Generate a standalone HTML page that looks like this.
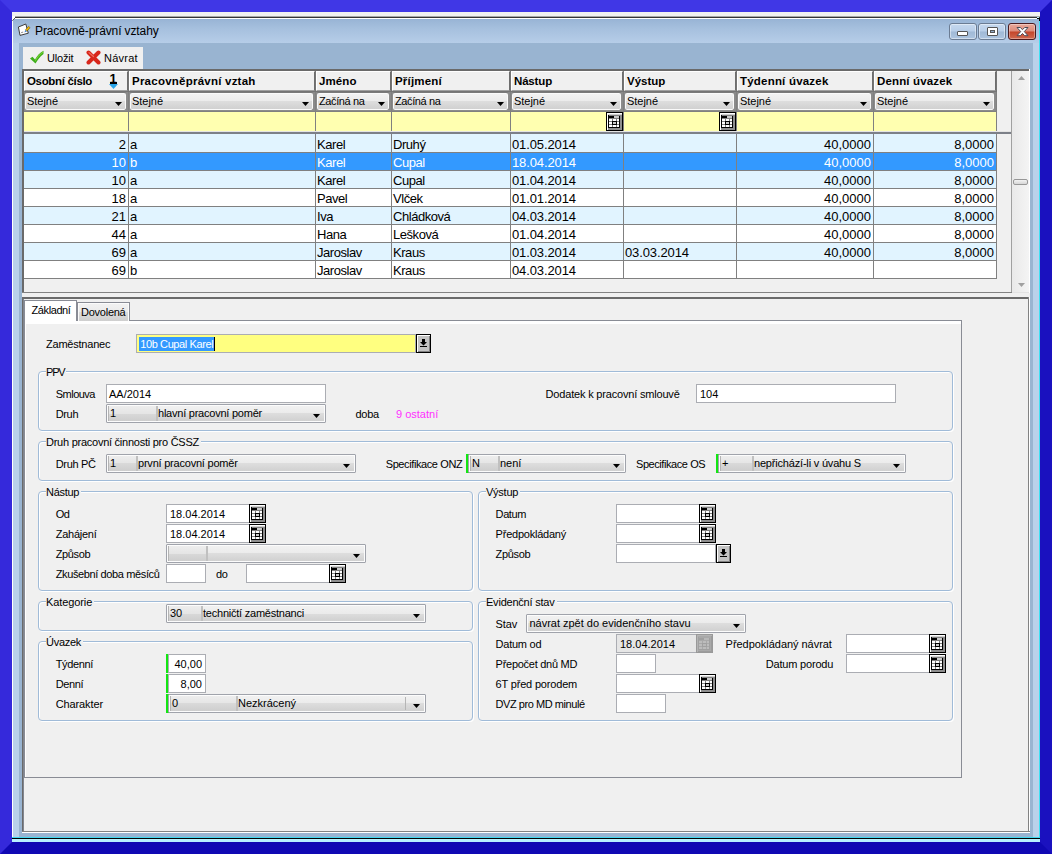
<!DOCTYPE html><html lang="cs"><head><meta charset="utf-8"><title>Pracovně-právní vztahy</title><style>
html,body{margin:0;padding:0;width:1052px;height:854px;overflow:hidden;background:#3a30e0}
body{font-family:"Liberation Sans",sans-serif;font-size:11px;color:#000;position:relative}
div,span{position:absolute;box-sizing:border-box;white-space:nowrap}
svg{position:absolute}
#bev{left:0;top:0;width:1052px;height:854px;border:12px solid;border-color:#4037e6 #1a11bf #1008b3 #3529db}
.ti{font-size:12px;line-height:14px;height:14px}
.t{font-size:11px;line-height:14px;height:14px}
.g{font-size:13px;line-height:16px;height:16px}
.h{font-size:11.5px;font-weight:bold;line-height:14px;height:14px}
.f{font-size:11px;line-height:14px;height:14px}
.inp{background:#fff;border:1px solid #abadb3}
.hd{background:#f0f0f0;border-top:1px solid #fff;border-left:1px solid #fff;border-right:1px solid #6d6d6d;border-bottom:1px solid #a0a0a0}
.dd{border-radius:3px;background:linear-gradient(#f3f3f3 0%,#ebebeb 50%,#dddddd 50%,#cfcfcf 100%);border:1px solid #8c8c8c;border-top-color:#7a7a7a;box-shadow:inset 0 0 0 1px #fafafa}
.cb{border-radius:1px;background:linear-gradient(#f2f2f2 0%,#ebebeb 50%,#dddddd 50%,#cfcfcf 100%);border:1px solid #a0a3ab;box-shadow:inset 0 0 0 1px #fcfcfc}
.cd{background:linear-gradient(#ededed 0%,#e5e5e5 50%,#d9d9d9 50%,#cecece 100%);border-left:1px solid #b4b4b4;border-right:2px solid #c0c0c0}
.fs{border:1px solid #a0bbd8;border-radius:4px;box-shadow:1px 1px 0 #fff, inset 1px 1px 0 #fff}
.lg{background:#f0f0f0;padding:0 2px 0 0;font-size:11px;line-height:14px;height:14px}
.gb{background:#12e612}
.bt{background:#c3c3c3;border:1px solid #000;box-shadow:inset 1px 1px 0 #fff, inset -1px -1px 0 #808080}
</style></head><body>
<div id="bev"></div>
<div style="left:12px;top:12px;width:1028px;height:4px;background:#f0f0f0"></div>
<div style="left:12px;top:16px;width:1028px;height:1px;background:#a6a6a6"></div>
<div style="left:12px;top:17px;width:1028px;height:1px;background:#353535"></div>
<div style="left:12px;top:18px;width:1028px;height:824px;background:#b9d1ea"></div>
<div style="left:12px;top:18px;width:1028px;height:1px;background:#fff"></div>
<div style="left:12px;top:18px;width:1px;height:820px;background:#fff"></div>
<div style="left:1039px;top:18px;width:1px;height:820px;background:#3fe0f3"></div>
<div style="left:12px;top:837px;width:1028px;height:1px;background:#3fd8f0"></div>
<div style="left:12px;top:838px;width:1028px;height:1px;background:#000"></div>
<div style="left:12px;top:839px;width:1028px;height:3px;background:#b8f0ff"></div>
<div style="left:13px;top:19px;width:1026px;height:24px;background:linear-gradient(#98b4d5 0%,#a6c0de 40%,#b6cde8 100%)"></div>
<div style="left:19px;top:43px;width:1014px;height:794px;background:#99b4d1"></div>
<div style="left:12px;top:16px;width:3px;height:2px;background:#fff"></div>
<div style="left:12px;top:18px;width:2px;height:1px;background:#fff"></div>
<div style="left:14px;top:18px;width:1px;height:1px;background:#5a5a5a"></div>
<div style="left:13px;top:19px;width:1px;height:1px;background:#5a5a5a"></div>
<div style="left:12px;top:19px;width:1px;height:1px;background:#fff"></div>
<div style="left:12px;top:20px;width:1px;height:1px;background:#8a8a8a"></div>
<div style="left:1037px;top:17px;width:2px;height:1px;background:#bff4ff"></div>
<div style="left:1037px;top:18px;width:2px;height:1px;background:#000"></div>
<div style="left:1039px;top:18px;width:1px;height:3px;background:#000"></div>
<span class="ti" style="left:35px;top:24px;letter-spacing:-0.112px;">Pracovně-právní vztahy</span>
<svg style="left:17px;top:22px" width="16" height="16" viewBox="0 0 16 16"><path d="M1.4 5 L8.8 2 L11.3 11.2 L3 13.4 Z" fill="#fff" stroke="#3c3c3c" stroke-width="1" stroke-linejoin="round"/><path d="M4.2 10.6 L6.2 10.1" stroke="#8a8a8a" stroke-width="1"/><path d="M11.5 4.3 L13.1 5.7 L9.8 9.3 L8.4 7.9 Z" fill="#f2b500" stroke="#5a4a10" stroke-width="0.5"/><path d="M8.4 7.9 L9.8 9.3 L7.4 10.4 Z" fill="#2f7fd6"/></svg>
<div style="left:949px;top:23px;width:28px;height:17px;border:1px solid #6b7c93;border-radius:3px;background:linear-gradient(#c5d8ee 0%,#b8cee8 48%,#a0b9d6 52%,#adc5e0 100%);box-shadow:inset 0 0 0 1px rgba(255,255,255,.45)"></div>
<div style="left:978px;top:23px;width:28px;height:17px;border:1px solid #6b7c93;border-radius:3px;background:linear-gradient(#c5d8ee 0%,#b8cee8 48%,#a0b9d6 52%,#adc5e0 100%);box-shadow:inset 0 0 0 1px rgba(255,255,255,.45)"></div>
<div style="left:1008px;top:23px;width:28px;height:17px;border:1px solid #4a1a1e;border-radius:3px;background:linear-gradient(#e9a99b 0%,#dc8b7a 48%,#c4452a 52%,#d0694f 100%);box-shadow:inset 0 0 0 1px rgba(255,255,255,.35)"></div>
<div style="left:957px;top:31px;width:11px;height:5px;border:1px solid #555;background:#fff;border-radius:1px"></div>
<div style="left:987px;top:27px;width:11px;height:9px;border:1px solid #555;background:#fff;border-radius:1px"></div>
<div style="left:990px;top:30px;width:5px;height:3px;background:#8fa9c8;border:1px solid #555"></div>
<svg style="left:1016px;top:26px" width="13" height="11" viewBox="0 0 13 11"><path d="M1 1.5 H4.3 L6.5 3.7 L8.7 1.5 H12 L8.3 5.6 L12 9.7 H8.7 L6.5 7.5 L4.3 9.7 H1 L4.7 5.6 Z" fill="#fff" stroke="#4a4a55" stroke-width="1" stroke-linejoin="round"/></svg>
<div style="left:23px;top:47px;width:120px;height:22px;background:#f0f0f0"></div>
<svg style="left:29px;top:50px" width="16" height="15" viewBox="0 0 16 15"><path d="M1 8.5 L3.5 6.8 L6 9.5 C8 6 10.5 3 14.5 0.8 L14.5 4 C11 6.5 8.5 10 6.5 13.5 Z" fill="#3fae1c"/><path d="M6.3 11.5 C8.5 7.5 11 4.8 14 2.5 L14.2 1.5 C10.5 3.8 8 7 6.2 10.2 Z" fill="#86dc3a"/></svg>
<span class="t" style="left:47px;top:50.5px;letter-spacing:-0.169px;">Uložit</span>
<svg style="left:86px;top:50px" width="15" height="15" viewBox="0 0 15 15"><path d="M2.5 2.5 L12.5 12.5 M12.5 2.5 L2.5 12.5" stroke="#d8281c" stroke-width="4" stroke-linecap="round"/><path d="M3 2.6 L7.5 6.5" stroke="#f0705f" stroke-width="1.2" stroke-linecap="round"/></svg>
<span class="t" style="left:104px;top:50.5px;letter-spacing:0.232px;">Návrat</span>
<div style="left:22px;top:69px;width:1008px;height:224px;background:#f0f0f0"></div>
<div style="left:22px;top:69px;width:1008px;height:2px;background:#6a6a6a"></div>
<div style="left:22px;top:69px;width:2px;height:224px;background:#6a6a6a"></div>
<div style="left:22px;top:292px;width:990px;height:1px;background:#828282"></div>
<div style="left:1012px;top:292px;width:17px;height:1px;background:#e3e3e3"></div>
<div style="left:1029px;top:69px;width:1px;height:224px;background:#fff"></div>
<div style="left:24px;top:71px;width:973px;height:21px;background:#757575"></div>
<div style="left:24px;top:92px;width:973px;height:20px;background:#808080"></div>
<div style="left:24px;top:112px;width:973px;height:19px;background:#ffffb0"></div>
<div style="left:24px;top:131px;width:987px;height:1px;background:#e4e4e4"></div>
<div style="left:24px;top:132px;width:987px;height:2px;background:#7c8088"></div>
<div class="hd" style="left:24px;top:71px;width:104px;height:20px;"></div>
<span class="h" style="left:27px;top:74px;letter-spacing:-0.335px;">Osobní číslo</span>
<div style="left:24px;top:92px;width:104px;height:19px;background:#8a8a8a"></div>
<div class="dd" style="left:24px;top:92px;width:103px;height:19px;"></div>
<span class="t" style="left:27px;top:94px;letter-spacing:-0.034px;">Stejné</span>
<svg style="left:115px;top:102px" width="7" height="4" viewBox="0 0 7 4"><path d="M0 0 H7 L3.5 4 Z" fill="#000"/></svg>
<div style="left:128px;top:112px;width:1px;height:19px;background:#808080"></div>
<div class="hd" style="left:129px;top:71px;width:186px;height:20px;"></div>
<span class="h" style="left:132px;top:74px;letter-spacing:0.235px;">Pracovněprávní vztah</span>
<div style="left:129px;top:92px;width:186px;height:19px;background:#8a8a8a"></div>
<div class="dd" style="left:129px;top:92px;width:185px;height:19px;"></div>
<span class="t" style="left:132px;top:94px;letter-spacing:-0.034px;">Stejné</span>
<svg style="left:302px;top:102px" width="7" height="4" viewBox="0 0 7 4"><path d="M0 0 H7 L3.5 4 Z" fill="#000"/></svg>
<div style="left:315px;top:112px;width:1px;height:19px;background:#808080"></div>
<div class="hd" style="left:316px;top:71px;width:75px;height:20px;"></div>
<span class="h" style="left:319px;top:74px;letter-spacing:0.084px;">Jméno</span>
<div style="left:316px;top:92px;width:75px;height:19px;background:#8a8a8a"></div>
<div class="dd" style="left:316px;top:92px;width:74px;height:19px;"></div>
<span class="t" style="left:319px;top:94px;letter-spacing:-0.380px;">Začíná na</span>
<svg style="left:378px;top:102px" width="7" height="4" viewBox="0 0 7 4"><path d="M0 0 H7 L3.5 4 Z" fill="#000"/></svg>
<div style="left:391px;top:112px;width:1px;height:19px;background:#808080"></div>
<div class="hd" style="left:392px;top:71px;width:118px;height:20px;"></div>
<span class="h" style="left:395px;top:74px;letter-spacing:0.201px;">Příjmení</span>
<div style="left:392px;top:92px;width:118px;height:19px;background:#8a8a8a"></div>
<div class="dd" style="left:392px;top:92px;width:117px;height:19px;"></div>
<span class="t" style="left:395px;top:94px;letter-spacing:-0.380px;">Začíná na</span>
<svg style="left:497px;top:102px" width="7" height="4" viewBox="0 0 7 4"><path d="M0 0 H7 L3.5 4 Z" fill="#000"/></svg>
<div style="left:510px;top:112px;width:1px;height:19px;background:#808080"></div>
<div class="hd" style="left:511px;top:71px;width:112px;height:20px;"></div>
<span class="h" style="left:514px;top:74px;letter-spacing:-0.164px;">Nástup</span>
<div style="left:511px;top:92px;width:112px;height:19px;background:#8a8a8a"></div>
<div class="dd" style="left:511px;top:92px;width:111px;height:19px;"></div>
<span class="t" style="left:514px;top:94px;letter-spacing:-0.034px;">Stejné</span>
<svg style="left:610px;top:102px" width="7" height="4" viewBox="0 0 7 4"><path d="M0 0 H7 L3.5 4 Z" fill="#000"/></svg>
<div style="left:623px;top:112px;width:1px;height:19px;background:#808080"></div>
<div class="hd" style="left:624px;top:71px;width:112px;height:20px;"></div>
<span class="h" style="left:627px;top:74px;letter-spacing:0.009px;">Výstup</span>
<div style="left:624px;top:92px;width:112px;height:19px;background:#8a8a8a"></div>
<div class="dd" style="left:624px;top:92px;width:111px;height:19px;"></div>
<span class="t" style="left:627px;top:94px;letter-spacing:-0.034px;">Stejné</span>
<svg style="left:723px;top:102px" width="7" height="4" viewBox="0 0 7 4"><path d="M0 0 H7 L3.5 4 Z" fill="#000"/></svg>
<div style="left:736px;top:112px;width:1px;height:19px;background:#808080"></div>
<div class="hd" style="left:737px;top:71px;width:136px;height:20px;"></div>
<span class="h" style="left:740px;top:74px;letter-spacing:0.204px;">Týdenní úvazek</span>
<div style="left:737px;top:92px;width:136px;height:19px;background:#8a8a8a"></div>
<div class="dd" style="left:737px;top:92px;width:135px;height:19px;"></div>
<span class="t" style="left:740px;top:94px;letter-spacing:-0.034px;">Stejné</span>
<svg style="left:860px;top:102px" width="7" height="4" viewBox="0 0 7 4"><path d="M0 0 H7 L3.5 4 Z" fill="#000"/></svg>
<div style="left:873px;top:112px;width:1px;height:19px;background:#808080"></div>
<div class="hd" style="left:874px;top:71px;width:122px;height:20px;"></div>
<span class="h" style="left:877px;top:74px;letter-spacing:0.142px;">Denní úvazek</span>
<div style="left:874px;top:92px;width:122px;height:19px;background:#8a8a8a"></div>
<div class="dd" style="left:874px;top:92px;width:121px;height:19px;"></div>
<span class="t" style="left:877px;top:94px;letter-spacing:-0.034px;">Stejné</span>
<svg style="left:983px;top:102px" width="7" height="4" viewBox="0 0 7 4"><path d="M0 0 H7 L3.5 4 Z" fill="#000"/></svg>
<div style="left:996px;top:112px;width:1px;height:19px;background:#808080"></div>
<span class="h" style="left:109.5px;top:71px;font-size:13px;line-height:16px;height:16px">1</span>
<svg style="left:109px;top:84px" width="9" height="5" viewBox="0 0 9 5"><path d="M0 0 H9 L4.5 5 Z" fill="#2aa5e8"/></svg>
<div style="left:110px;top:82px;width:7px;height:2px;background:#000"></div>
<div style="left:24px;top:134px;width:973px;height:18px;background:#e1f4ff"></div>
<div style="left:24px;top:152px;width:973px;height:1px;background:#808080"></div>
<div style="left:128px;top:134px;width:1px;height:19px;background:#808080"></div>
<span class="g" style="left:24px;top:136.5px;width:102px;color:#000;text-align:right">2</span>
<div style="left:315px;top:134px;width:1px;height:19px;background:#808080"></div>
<span class="g" style="left:130px;top:136.5px;color:#000;">a</span>
<div style="left:391px;top:134px;width:1px;height:19px;background:#808080"></div>
<span class="g" style="left:317px;top:136.5px;color:#000;letter-spacing:-0.45px;">Karel</span>
<div style="left:510px;top:134px;width:1px;height:19px;background:#808080"></div>
<span class="g" style="left:393px;top:136.5px;color:#000;letter-spacing:-0.45px;">Druhý</span>
<div style="left:623px;top:134px;width:1px;height:19px;background:#808080"></div>
<span class="g" style="left:512px;top:136.5px;color:#000;letter-spacing:-0.12px;">01.05.2014</span>
<div style="left:736px;top:134px;width:1px;height:19px;background:#808080"></div>
<div style="left:873px;top:134px;width:1px;height:19px;background:#808080"></div>
<span class="g" style="left:737px;top:136.5px;width:134px;color:#000;text-align:right">40,0000</span>
<div style="left:996px;top:134px;width:1px;height:19px;background:#808080"></div>
<span class="g" style="left:874px;top:136.5px;width:120px;color:#000;text-align:right">8,0000</span>
<div style="left:24px;top:153px;width:973px;height:17px;background:#3399ff"></div>
<div style="left:24px;top:170px;width:973px;height:1px;background:#808080"></div>
<div style="left:128px;top:153px;width:1px;height:18px;background:#808080"></div>
<span class="g" style="left:24px;top:154.5px;width:102px;color:#fff;text-align:right">10</span>
<div style="left:315px;top:153px;width:1px;height:18px;background:#808080"></div>
<span class="g" style="left:130px;top:154.5px;color:#fff;">b</span>
<div style="left:391px;top:153px;width:1px;height:18px;background:#808080"></div>
<span class="g" style="left:317px;top:154.5px;color:#fff;letter-spacing:-0.45px;">Karel</span>
<div style="left:510px;top:153px;width:1px;height:18px;background:#808080"></div>
<span class="g" style="left:393px;top:154.5px;color:#fff;letter-spacing:-0.45px;">Cupal</span>
<div style="left:623px;top:153px;width:1px;height:18px;background:#808080"></div>
<span class="g" style="left:512px;top:154.5px;color:#fff;letter-spacing:-0.12px;">18.04.2014</span>
<div style="left:736px;top:153px;width:1px;height:18px;background:#808080"></div>
<div style="left:873px;top:153px;width:1px;height:18px;background:#808080"></div>
<span class="g" style="left:737px;top:154.5px;width:134px;color:#fff;text-align:right">40,0000</span>
<div style="left:996px;top:153px;width:1px;height:18px;background:#808080"></div>
<span class="g" style="left:874px;top:154.5px;width:120px;color:#fff;text-align:right">8,0000</span>
<div style="left:24px;top:171px;width:973px;height:17px;background:#e1f4ff"></div>
<div style="left:24px;top:188px;width:973px;height:1px;background:#808080"></div>
<div style="left:128px;top:171px;width:1px;height:18px;background:#808080"></div>
<span class="g" style="left:24px;top:172.5px;width:102px;color:#000;text-align:right">10</span>
<div style="left:315px;top:171px;width:1px;height:18px;background:#808080"></div>
<span class="g" style="left:130px;top:172.5px;color:#000;">a</span>
<div style="left:391px;top:171px;width:1px;height:18px;background:#808080"></div>
<span class="g" style="left:317px;top:172.5px;color:#000;letter-spacing:-0.45px;">Karel</span>
<div style="left:510px;top:171px;width:1px;height:18px;background:#808080"></div>
<span class="g" style="left:393px;top:172.5px;color:#000;letter-spacing:-0.45px;">Cupal</span>
<div style="left:623px;top:171px;width:1px;height:18px;background:#808080"></div>
<span class="g" style="left:512px;top:172.5px;color:#000;letter-spacing:-0.12px;">01.04.2014</span>
<div style="left:736px;top:171px;width:1px;height:18px;background:#808080"></div>
<div style="left:873px;top:171px;width:1px;height:18px;background:#808080"></div>
<span class="g" style="left:737px;top:172.5px;width:134px;color:#000;text-align:right">40,0000</span>
<div style="left:996px;top:171px;width:1px;height:18px;background:#808080"></div>
<span class="g" style="left:874px;top:172.5px;width:120px;color:#000;text-align:right">8,0000</span>
<div style="left:24px;top:189px;width:973px;height:17px;background:#fff"></div>
<div style="left:24px;top:206px;width:973px;height:1px;background:#808080"></div>
<div style="left:128px;top:189px;width:1px;height:18px;background:#808080"></div>
<span class="g" style="left:24px;top:190.5px;width:102px;color:#000;text-align:right">18</span>
<div style="left:315px;top:189px;width:1px;height:18px;background:#808080"></div>
<span class="g" style="left:130px;top:190.5px;color:#000;">a</span>
<div style="left:391px;top:189px;width:1px;height:18px;background:#808080"></div>
<span class="g" style="left:317px;top:190.5px;color:#000;letter-spacing:-0.45px;">Pavel</span>
<div style="left:510px;top:189px;width:1px;height:18px;background:#808080"></div>
<span class="g" style="left:393px;top:190.5px;color:#000;letter-spacing:-0.45px;">Vlček</span>
<div style="left:623px;top:189px;width:1px;height:18px;background:#808080"></div>
<span class="g" style="left:512px;top:190.5px;color:#000;letter-spacing:-0.12px;">01.01.2014</span>
<div style="left:736px;top:189px;width:1px;height:18px;background:#808080"></div>
<div style="left:873px;top:189px;width:1px;height:18px;background:#808080"></div>
<span class="g" style="left:737px;top:190.5px;width:134px;color:#000;text-align:right">40,0000</span>
<div style="left:996px;top:189px;width:1px;height:18px;background:#808080"></div>
<span class="g" style="left:874px;top:190.5px;width:120px;color:#000;text-align:right">8,0000</span>
<div style="left:24px;top:207px;width:973px;height:17px;background:#e1f4ff"></div>
<div style="left:24px;top:224px;width:973px;height:1px;background:#808080"></div>
<div style="left:128px;top:207px;width:1px;height:18px;background:#808080"></div>
<span class="g" style="left:24px;top:208.5px;width:102px;color:#000;text-align:right">21</span>
<div style="left:315px;top:207px;width:1px;height:18px;background:#808080"></div>
<span class="g" style="left:130px;top:208.5px;color:#000;">a</span>
<div style="left:391px;top:207px;width:1px;height:18px;background:#808080"></div>
<span class="g" style="left:317px;top:208.5px;color:#000;letter-spacing:-0.45px;">Iva</span>
<div style="left:510px;top:207px;width:1px;height:18px;background:#808080"></div>
<span class="g" style="left:393px;top:208.5px;color:#000;letter-spacing:-0.45px;">Chládková</span>
<div style="left:623px;top:207px;width:1px;height:18px;background:#808080"></div>
<span class="g" style="left:512px;top:208.5px;color:#000;letter-spacing:-0.12px;">04.03.2014</span>
<div style="left:736px;top:207px;width:1px;height:18px;background:#808080"></div>
<div style="left:873px;top:207px;width:1px;height:18px;background:#808080"></div>
<span class="g" style="left:737px;top:208.5px;width:134px;color:#000;text-align:right">40,0000</span>
<div style="left:996px;top:207px;width:1px;height:18px;background:#808080"></div>
<span class="g" style="left:874px;top:208.5px;width:120px;color:#000;text-align:right">8,0000</span>
<div style="left:24px;top:225px;width:973px;height:17px;background:#fff"></div>
<div style="left:24px;top:242px;width:973px;height:1px;background:#808080"></div>
<div style="left:128px;top:225px;width:1px;height:18px;background:#808080"></div>
<span class="g" style="left:24px;top:226.5px;width:102px;color:#000;text-align:right">44</span>
<div style="left:315px;top:225px;width:1px;height:18px;background:#808080"></div>
<span class="g" style="left:130px;top:226.5px;color:#000;">a</span>
<div style="left:391px;top:225px;width:1px;height:18px;background:#808080"></div>
<span class="g" style="left:317px;top:226.5px;color:#000;letter-spacing:-0.45px;">Hana</span>
<div style="left:510px;top:225px;width:1px;height:18px;background:#808080"></div>
<span class="g" style="left:393px;top:226.5px;color:#000;letter-spacing:-0.45px;">Lešková</span>
<div style="left:623px;top:225px;width:1px;height:18px;background:#808080"></div>
<span class="g" style="left:512px;top:226.5px;color:#000;letter-spacing:-0.12px;">01.04.2014</span>
<div style="left:736px;top:225px;width:1px;height:18px;background:#808080"></div>
<div style="left:873px;top:225px;width:1px;height:18px;background:#808080"></div>
<span class="g" style="left:737px;top:226.5px;width:134px;color:#000;text-align:right">40,0000</span>
<div style="left:996px;top:225px;width:1px;height:18px;background:#808080"></div>
<span class="g" style="left:874px;top:226.5px;width:120px;color:#000;text-align:right">8,0000</span>
<div style="left:24px;top:243px;width:973px;height:17px;background:#e1f4ff"></div>
<div style="left:24px;top:260px;width:973px;height:1px;background:#808080"></div>
<div style="left:128px;top:243px;width:1px;height:18px;background:#808080"></div>
<span class="g" style="left:24px;top:244.5px;width:102px;color:#000;text-align:right">69</span>
<div style="left:315px;top:243px;width:1px;height:18px;background:#808080"></div>
<span class="g" style="left:130px;top:244.5px;color:#000;">a</span>
<div style="left:391px;top:243px;width:1px;height:18px;background:#808080"></div>
<span class="g" style="left:317px;top:244.5px;color:#000;letter-spacing:-0.45px;">Jaroslav</span>
<div style="left:510px;top:243px;width:1px;height:18px;background:#808080"></div>
<span class="g" style="left:393px;top:244.5px;color:#000;letter-spacing:-0.45px;">Kraus</span>
<div style="left:623px;top:243px;width:1px;height:18px;background:#808080"></div>
<span class="g" style="left:512px;top:244.5px;color:#000;letter-spacing:-0.12px;">01.03.2014</span>
<div style="left:736px;top:243px;width:1px;height:18px;background:#808080"></div>
<span class="g" style="left:625px;top:244.5px;color:#000;letter-spacing:-0.12px;">03.03.2014</span>
<div style="left:873px;top:243px;width:1px;height:18px;background:#808080"></div>
<span class="g" style="left:737px;top:244.5px;width:134px;color:#000;text-align:right">40,0000</span>
<div style="left:996px;top:243px;width:1px;height:18px;background:#808080"></div>
<span class="g" style="left:874px;top:244.5px;width:120px;color:#000;text-align:right">8,0000</span>
<div style="left:24px;top:261px;width:973px;height:17px;background:#fff"></div>
<div style="left:24px;top:278px;width:973px;height:1px;background:#808080"></div>
<div style="left:128px;top:261px;width:1px;height:18px;background:#808080"></div>
<span class="g" style="left:24px;top:262.5px;width:102px;color:#000;text-align:right">69</span>
<div style="left:315px;top:261px;width:1px;height:18px;background:#808080"></div>
<span class="g" style="left:130px;top:262.5px;color:#000;">b</span>
<div style="left:391px;top:261px;width:1px;height:18px;background:#808080"></div>
<span class="g" style="left:317px;top:262.5px;color:#000;letter-spacing:-0.45px;">Jaroslav</span>
<div style="left:510px;top:261px;width:1px;height:18px;background:#808080"></div>
<span class="g" style="left:393px;top:262.5px;color:#000;letter-spacing:-0.45px;">Kraus</span>
<div style="left:623px;top:261px;width:1px;height:18px;background:#808080"></div>
<span class="g" style="left:512px;top:262.5px;color:#000;letter-spacing:-0.12px;">04.03.2014</span>
<div style="left:736px;top:261px;width:1px;height:18px;background:#808080"></div>
<div style="left:873px;top:261px;width:1px;height:18px;background:#808080"></div>
<div style="left:996px;top:261px;width:1px;height:18px;background:#808080"></div>
<div style="left:606px;top:112px;width:17px;height:19px;background:#8e8e8e;border:1px solid #000;box-shadow:inset 1px 1px 0 #fff, inset 0 2px 0 #cfcfcf"></div>
<svg style="left:608px;top:115px" width="13" height="13" viewBox="0 0 13 13" shape-rendering="crispEdges"><rect x="0" y="0" width="12" height="13" fill="#808080"/><rect x="0" y="0" width="1" height="13" fill="#000"/><rect x="0" y="12" width="12" height="1" fill="#000"/><rect x="11" y="1" width="1" height="12" fill="#000"/><rect x="1" y="1" width="5" height="2" fill="#000"/><rect x="6" y="1" width="5" height="2" fill="#c8c8c8"/><rect x="1" y="4" width="3" height="2" fill="#fff"/><rect x="5" y="4" width="3" height="2" fill="#fff"/><rect x="9" y="4" width="2" height="2" fill="#fff"/><rect x="1" y="7" width="3" height="2" fill="#fff"/><rect x="5" y="7" width="3" height="2" fill="#fff"/><rect x="9" y="7" width="2" height="2" fill="#fff"/><rect x="1" y="10" width="3" height="2" fill="#fff"/><rect x="5" y="10" width="3" height="2" fill="#fff"/><rect x="9" y="10" width="2" height="2" fill="#fff"/><rect x="4" y="6" width="5" height="4" fill="#000"/><rect x="5" y="7" width="3" height="2" fill="#c8c8c8"/></svg>
<div style="left:719px;top:112px;width:17px;height:19px;background:#8e8e8e;border:1px solid #000;box-shadow:inset 1px 1px 0 #fff, inset 0 2px 0 #cfcfcf"></div>
<svg style="left:721px;top:115px" width="13" height="13" viewBox="0 0 13 13" shape-rendering="crispEdges"><rect x="0" y="0" width="12" height="13" fill="#808080"/><rect x="0" y="0" width="1" height="13" fill="#000"/><rect x="0" y="12" width="12" height="1" fill="#000"/><rect x="11" y="1" width="1" height="12" fill="#000"/><rect x="1" y="1" width="5" height="2" fill="#000"/><rect x="6" y="1" width="5" height="2" fill="#c8c8c8"/><rect x="1" y="4" width="3" height="2" fill="#fff"/><rect x="5" y="4" width="3" height="2" fill="#fff"/><rect x="9" y="4" width="2" height="2" fill="#fff"/><rect x="1" y="7" width="3" height="2" fill="#fff"/><rect x="5" y="7" width="3" height="2" fill="#fff"/><rect x="9" y="7" width="2" height="2" fill="#fff"/><rect x="1" y="10" width="3" height="2" fill="#fff"/><rect x="5" y="10" width="3" height="2" fill="#fff"/><rect x="9" y="10" width="2" height="2" fill="#fff"/><rect x="4" y="6" width="5" height="4" fill="#000"/><rect x="5" y="7" width="3" height="2" fill="#c8c8c8"/></svg>
<div style="left:1011px;top:71px;width:1px;height:221px;background:#a0a0a0"></div>
<div style="left:1012px;top:71px;width:17px;height:221px;background:linear-gradient(90deg,#e9e9e9,#f4f4f4)"></div>
<svg style="left:1018px;top:76px" width="7" height="4" viewBox="0 0 7 4"><path d="M0 4 H7 L3.5 0 Z" fill="#a0a0a0"/></svg>
<svg style="left:1018px;top:283px" width="7" height="4" viewBox="0 0 7 4"><path d="M0 0 H7 L3.5 4 Z" fill="#a0a0a0"/></svg>
<div style="left:1013px;top:179px;width:15px;height:6px;border:1px solid #979797;border-radius:2px;background:linear-gradient(#f2f2f2,#d6d6d6)"></div>
<div style="left:22px;top:293px;width:1008px;height:4px;background:#f0f0f0"></div>
<div style="left:22px;top:297px;width:1008px;height:536px;background:#f0f0f0"></div>
<div style="left:22px;top:297px;width:1008px;height:2px;background:#6a6a6a"></div>
<div style="left:22px;top:297px;width:1px;height:536px;background:#6a6a6a"></div>
<div style="left:23px;top:299px;width:1px;height:532px;background:#82868f"></div>
<div style="left:1028px;top:297px;width:1px;height:536px;background:#828282"></div>
<div style="left:1029px;top:297px;width:1px;height:536px;background:#fff"></div>
<div style="left:22px;top:831px;width:1008px;height:1px;background:#828282"></div>
<div style="left:22px;top:832px;width:1008px;height:1px;background:#fff"></div>
<div style="left:24px;top:320px;width:938px;height:458px;background:#f0f0f0;border:1px solid #898c95"></div>
<div style="left:25px;top:321px;width:936px;height:3px;background:#fff"></div>
<div style="left:25px;top:321px;width:1px;height:456px;background:#fff"></div>
<div style="left:77px;top:302px;width:53px;height:19px;border:1px solid #898c95;border-bottom:0;background:linear-gradient(#f2f2f2 0%,#ebebeb 50%,#dddddd 50%,#cfcfcf 100%);box-shadow:inset 1px 1px 0 #fbfbfb, inset -1px 0 0 #fbfbfb"></div>
<div style="left:24px;top:300px;width:53px;height:21px;border:1px solid #898c95;border-bottom:0;background:#fff"></div>
<div style="left:25px;top:320px;width:51px;height:2px;background:#fff"></div>
<span class="f" style="left:31.5px;top:302.5px;letter-spacing:-0.400px;">Základní</span>
<span class="f" style="left:81px;top:304.5px;letter-spacing:-0.248px;">Dovolená</span>
<span class="f" style="left:46px;top:337px;letter-spacing:-0.223px;">Zaměstnanec</span>
<div style="left:136px;top:334px;width:280px;height:19px;background:#ffff80;border:1px solid #abadb3"></div>
<div style="left:139px;top:337px;width:75px;height:14px;background:#3399ff"></div>
<span class="f" style="left:140.3px;top:337px;letter-spacing:-0.399px;color:#fff">10b Cupal Karel</span>
<div style="left:214px;top:337px;width:1px;height:14px;background:#000"></div>
<div class="bt" style="left:416px;top:334px;width:15px;height:19px;"></div>
<svg style="left:420px;top:339px" width="7" height="8" viewBox="0 0 7 8"><path d="M2 0 H5 V3 H7 L3.5 6.5 L0 3 H2 Z" fill="#000"/><rect x="0" y="7" width="7" height="1" fill="#000" shape-rendering="crispEdges"/></svg>
<div class="fs" style="left:38px;top:371px;width:915px;height:60px;"></div>
<span class="lg" style="left:46px;top:365px;letter-spacing:-1.205px;">PPV</span>
<span class="f" style="left:55.7px;top:387px;letter-spacing:-0.500px;">Smlouva</span>
<div class="inp" style="left:106px;top:384px;width:220px;height:19px;"></div>
<span class="f" style="left:109px;top:387px;">AA/2014</span>
<span class="f" style="left:545.6px;top:387px;letter-spacing:-0.184px;">Dodatek k pracovní smlouvě</span>
<div class="inp" style="left:696px;top:384px;width:200px;height:19px;"></div>
<span class="f" style="left:700px;top:387px;">104</span>
<span class="f" style="left:55.7px;top:407px;letter-spacing:-0.336px;">Druh</span>
<div class="cb" style="left:106px;top:404px;width:220px;height:19px;"></div>
<div class="cd" style="left:108px;top:406px;width:50px;height:15px;"></div>
<span class="f" style="left:110px;top:406px;">1</span>
<span class="f" style="left:158px;top:406px;letter-spacing:-0.231px;">hlavní pracovní poměr</span>
<svg style="left:313px;top:414px" width="7" height="4" viewBox="0 0 7 4"><path d="M0 0 H7 L3.5 4 Z" fill="#000"/></svg>
<span class="f" style="left:355.5px;top:407px;letter-spacing:-0.246px;">doba</span>
<span class="f" style="left:396px;top:407px;color:#ff30ff">9 ostatní</span>
<div class="fs" style="left:38px;top:441px;width:915px;height:40px;"></div>
<span class="lg" style="left:46px;top:435px;letter-spacing:-0.252px;">Druh pracovní činnosti pro ČSSZ</span>
<span class="f" style="left:55.7px;top:457px;letter-spacing:-0.312px;">Druh PČ</span>
<div class="cb" style="left:106px;top:454px;width:250px;height:19px;"></div>
<div class="cd" style="left:108px;top:456px;width:30px;height:15px;"></div>
<span class="f" style="left:110px;top:456px;">1</span>
<span class="f" style="left:138px;top:456px;letter-spacing:-0.217px;">první pracovní poměr</span>
<svg style="left:343px;top:464px" width="7" height="4" viewBox="0 0 7 4"><path d="M0 0 H7 L3.5 4 Z" fill="#000"/></svg>
<span class="f" style="left:385.7px;top:457px;letter-spacing:-0.395px;">Specifikace ONZ</span>
<div class="gb" style="left:466px;top:454px;width:3px;height:19px;"></div>
<div class="cb" style="left:468px;top:454px;width:158px;height:19px;"></div>
<div class="cd" style="left:470px;top:456px;width:30px;height:15px;"></div>
<span class="f" style="left:472px;top:456px;">N</span>
<span class="f" style="left:500px;top:456px;">není</span>
<svg style="left:613px;top:464px" width="7" height="4" viewBox="0 0 7 4"><path d="M0 0 H7 L3.5 4 Z" fill="#000"/></svg>
<span class="f" style="left:636px;top:457px;letter-spacing:-0.429px;">Specifikace OS</span>
<div class="gb" style="left:716px;top:454px;width:3px;height:19px;"></div>
<div class="cb" style="left:718px;top:454px;width:188px;height:19px;"></div>
<div class="cd" style="left:720px;top:456px;width:34px;height:15px;"></div>
<span class="f" style="left:722px;top:456px;">+</span>
<span class="f" style="left:754px;top:456px;letter-spacing:-0.186px;">nepřichází-li v úvahu S</span>
<svg style="left:893px;top:464px" width="7" height="4" viewBox="0 0 7 4"><path d="M0 0 H7 L3.5 4 Z" fill="#000"/></svg>
<div class="fs" style="left:38px;top:491px;width:435px;height:100px;"></div>
<span class="lg" style="left:46px;top:485px;letter-spacing:-0.293px;">Nástup</span>
<span class="f" style="left:55.7px;top:507px;letter-spacing:-0.544px;">Od</span>
<div class="inp" style="left:166px;top:504px;width:84px;height:19px;"></div>
<span class="f" style="left:170px;top:507px;">18.04.2014</span>
<div style="left:249px;top:504px;width:17px;height:19px;background:#8e8e8e;border:1px solid #000;box-shadow:inset 1px 1px 0 #fff, inset 0 2px 0 #cfcfcf"></div>
<svg style="left:251px;top:507px" width="13" height="13" viewBox="0 0 13 13" shape-rendering="crispEdges"><rect x="0" y="0" width="12" height="13" fill="#808080"/><rect x="0" y="0" width="1" height="13" fill="#000"/><rect x="0" y="12" width="12" height="1" fill="#000"/><rect x="11" y="1" width="1" height="12" fill="#000"/><rect x="1" y="1" width="5" height="2" fill="#000"/><rect x="6" y="1" width="5" height="2" fill="#c8c8c8"/><rect x="1" y="4" width="3" height="2" fill="#fff"/><rect x="5" y="4" width="3" height="2" fill="#fff"/><rect x="9" y="4" width="2" height="2" fill="#fff"/><rect x="1" y="7" width="3" height="2" fill="#fff"/><rect x="5" y="7" width="3" height="2" fill="#fff"/><rect x="9" y="7" width="2" height="2" fill="#fff"/><rect x="1" y="10" width="3" height="2" fill="#fff"/><rect x="5" y="10" width="3" height="2" fill="#fff"/><rect x="9" y="10" width="2" height="2" fill="#fff"/><rect x="4" y="6" width="5" height="4" fill="#000"/><rect x="5" y="7" width="3" height="2" fill="#c8c8c8"/></svg>
<span class="f" style="left:55.7px;top:527px;letter-spacing:-0.252px;">Zahájení</span>
<div class="inp" style="left:166px;top:524px;width:84px;height:19px;"></div>
<span class="f" style="left:170px;top:527px;">18.04.2014</span>
<div style="left:249px;top:524px;width:17px;height:19px;background:#8e8e8e;border:1px solid #000;box-shadow:inset 1px 1px 0 #fff, inset 0 2px 0 #cfcfcf"></div>
<svg style="left:251px;top:527px" width="13" height="13" viewBox="0 0 13 13" shape-rendering="crispEdges"><rect x="0" y="0" width="12" height="13" fill="#808080"/><rect x="0" y="0" width="1" height="13" fill="#000"/><rect x="0" y="12" width="12" height="1" fill="#000"/><rect x="11" y="1" width="1" height="12" fill="#000"/><rect x="1" y="1" width="5" height="2" fill="#000"/><rect x="6" y="1" width="5" height="2" fill="#c8c8c8"/><rect x="1" y="4" width="3" height="2" fill="#fff"/><rect x="5" y="4" width="3" height="2" fill="#fff"/><rect x="9" y="4" width="2" height="2" fill="#fff"/><rect x="1" y="7" width="3" height="2" fill="#fff"/><rect x="5" y="7" width="3" height="2" fill="#fff"/><rect x="9" y="7" width="2" height="2" fill="#fff"/><rect x="1" y="10" width="3" height="2" fill="#fff"/><rect x="5" y="10" width="3" height="2" fill="#fff"/><rect x="9" y="10" width="2" height="2" fill="#fff"/><rect x="4" y="6" width="5" height="4" fill="#000"/><rect x="5" y="7" width="3" height="2" fill="#c8c8c8"/></svg>
<span class="f" style="left:55.7px;top:547px;letter-spacing:-0.351px;">Způsob</span>
<div class="cb" style="left:166px;top:544px;width:200px;height:19px;"></div>
<div class="cd" style="left:168px;top:546px;width:40px;height:15px;"></div>
<svg style="left:353px;top:554px" width="7" height="4" viewBox="0 0 7 4"><path d="M0 0 H7 L3.5 4 Z" fill="#000"/></svg>
<span class="f" style="left:55.7px;top:567px;letter-spacing:-0.375px;">Zkušební doba měsíců</span>
<div class="inp" style="left:166px;top:564px;width:40px;height:19px;"></div>
<span class="f" style="left:216px;top:567px;letter-spacing:-0.325px;">do</span>
<div class="inp" style="left:246px;top:564px;width:84px;height:19px;"></div>
<div style="left:329px;top:564px;width:17px;height:19px;background:#8e8e8e;border:1px solid #000;box-shadow:inset 1px 1px 0 #fff, inset 0 2px 0 #cfcfcf"></div>
<svg style="left:331px;top:567px" width="13" height="13" viewBox="0 0 13 13" shape-rendering="crispEdges"><rect x="0" y="0" width="12" height="13" fill="#808080"/><rect x="0" y="0" width="1" height="13" fill="#000"/><rect x="0" y="12" width="12" height="1" fill="#000"/><rect x="11" y="1" width="1" height="12" fill="#000"/><rect x="1" y="1" width="5" height="2" fill="#000"/><rect x="6" y="1" width="5" height="2" fill="#c8c8c8"/><rect x="1" y="4" width="3" height="2" fill="#fff"/><rect x="5" y="4" width="3" height="2" fill="#fff"/><rect x="9" y="4" width="2" height="2" fill="#fff"/><rect x="1" y="7" width="3" height="2" fill="#fff"/><rect x="5" y="7" width="3" height="2" fill="#fff"/><rect x="9" y="7" width="2" height="2" fill="#fff"/><rect x="1" y="10" width="3" height="2" fill="#fff"/><rect x="5" y="10" width="3" height="2" fill="#fff"/><rect x="9" y="10" width="2" height="2" fill="#fff"/><rect x="4" y="6" width="5" height="4" fill="#000"/><rect x="5" y="7" width="3" height="2" fill="#c8c8c8"/></svg>
<div class="fs" style="left:478px;top:491px;width:475px;height:100px;"></div>
<span class="lg" style="left:486px;top:485px;letter-spacing:-0.240px;">Výstup</span>
<span class="f" style="left:495.6px;top:507px;letter-spacing:-0.401px;">Datum</span>
<div class="inp" style="left:616px;top:504px;width:84px;height:19px;"></div>
<div style="left:699px;top:504px;width:17px;height:19px;background:#8e8e8e;border:1px solid #000;box-shadow:inset 1px 1px 0 #fff, inset 0 2px 0 #cfcfcf"></div>
<svg style="left:701px;top:507px" width="13" height="13" viewBox="0 0 13 13" shape-rendering="crispEdges"><rect x="0" y="0" width="12" height="13" fill="#808080"/><rect x="0" y="0" width="1" height="13" fill="#000"/><rect x="0" y="12" width="12" height="1" fill="#000"/><rect x="11" y="1" width="1" height="12" fill="#000"/><rect x="1" y="1" width="5" height="2" fill="#000"/><rect x="6" y="1" width="5" height="2" fill="#c8c8c8"/><rect x="1" y="4" width="3" height="2" fill="#fff"/><rect x="5" y="4" width="3" height="2" fill="#fff"/><rect x="9" y="4" width="2" height="2" fill="#fff"/><rect x="1" y="7" width="3" height="2" fill="#fff"/><rect x="5" y="7" width="3" height="2" fill="#fff"/><rect x="9" y="7" width="2" height="2" fill="#fff"/><rect x="1" y="10" width="3" height="2" fill="#fff"/><rect x="5" y="10" width="3" height="2" fill="#fff"/><rect x="9" y="10" width="2" height="2" fill="#fff"/><rect x="4" y="6" width="5" height="4" fill="#000"/><rect x="5" y="7" width="3" height="2" fill="#c8c8c8"/></svg>
<span class="f" style="left:495.6px;top:527px;letter-spacing:-0.230px;">Předpokládaný</span>
<div class="inp" style="left:616px;top:524px;width:84px;height:19px;"></div>
<div style="left:699px;top:524px;width:17px;height:19px;background:#8e8e8e;border:1px solid #000;box-shadow:inset 1px 1px 0 #fff, inset 0 2px 0 #cfcfcf"></div>
<svg style="left:701px;top:527px" width="13" height="13" viewBox="0 0 13 13" shape-rendering="crispEdges"><rect x="0" y="0" width="12" height="13" fill="#808080"/><rect x="0" y="0" width="1" height="13" fill="#000"/><rect x="0" y="12" width="12" height="1" fill="#000"/><rect x="11" y="1" width="1" height="12" fill="#000"/><rect x="1" y="1" width="5" height="2" fill="#000"/><rect x="6" y="1" width="5" height="2" fill="#c8c8c8"/><rect x="1" y="4" width="3" height="2" fill="#fff"/><rect x="5" y="4" width="3" height="2" fill="#fff"/><rect x="9" y="4" width="2" height="2" fill="#fff"/><rect x="1" y="7" width="3" height="2" fill="#fff"/><rect x="5" y="7" width="3" height="2" fill="#fff"/><rect x="9" y="7" width="2" height="2" fill="#fff"/><rect x="1" y="10" width="3" height="2" fill="#fff"/><rect x="5" y="10" width="3" height="2" fill="#fff"/><rect x="9" y="10" width="2" height="2" fill="#fff"/><rect x="4" y="6" width="5" height="4" fill="#000"/><rect x="5" y="7" width="3" height="2" fill="#c8c8c8"/></svg>
<span class="f" style="left:495.6px;top:547px;letter-spacing:-0.351px;">Způsob</span>
<div class="inp" style="left:616px;top:544px;width:100px;height:19px;"></div>
<div class="bt" style="left:716px;top:544px;width:15px;height:19px;"></div>
<svg style="left:720px;top:549px" width="7" height="8" viewBox="0 0 7 8"><path d="M2 0 H5 V3 H7 L3.5 6.5 L0 3 H2 Z" fill="#000"/><rect x="0" y="7" width="7" height="1" fill="#000" shape-rendering="crispEdges"/></svg>
<div class="fs" style="left:38px;top:601px;width:435px;height:30px;"></div>
<span class="lg" style="left:46px;top:595px;letter-spacing:-0.099px;">Kategorie</span>
<div class="cb" style="left:166px;top:604px;width:260px;height:19px;"></div>
<div class="cd" style="left:168px;top:606px;width:35px;height:15px;"></div>
<span class="f" style="left:170px;top:606px;">30</span>
<span class="f" style="left:203px;top:606px;letter-spacing:-0.228px;">techničtí zaměstnanci</span>
<svg style="left:413px;top:614px" width="7" height="4" viewBox="0 0 7 4"><path d="M0 0 H7 L3.5 4 Z" fill="#000"/></svg>
<div class="fs" style="left:38px;top:641px;width:435px;height:80px;"></div>
<span class="lg" style="left:46px;top:635px;letter-spacing:-0.265px;">Úvazek</span>
<span class="f" style="left:55.7px;top:657px;letter-spacing:-0.350px;">Týdenní</span>
<div class="gb" style="left:166px;top:654px;width:3px;height:19px;"></div>
<div class="inp" style="left:168px;top:654px;width:38px;height:19px;"></div>
<span class="f" style="left:168px;top:657px;width:34px;text-align:right">40,00</span>
<span class="f" style="left:55.7px;top:677px;letter-spacing:-0.372px;">Denní</span>
<div class="gb" style="left:166px;top:674px;width:3px;height:19px;"></div>
<div class="inp" style="left:168px;top:674px;width:38px;height:19px;"></div>
<span class="f" style="left:168px;top:677px;width:34px;text-align:right">8,00</span>
<span class="f" style="left:55.7px;top:697px;letter-spacing:-0.111px;">Charakter</span>
<div class="gb" style="left:166px;top:694px;width:3px;height:19px;"></div>
<div class="cb" style="left:168px;top:694px;width:258px;height:19px;"></div>
<div class="cd" style="left:170px;top:696px;width:68px;height:15px;"></div>
<span class="f" style="left:172px;top:696px;">0</span>
<span class="f" style="left:238px;top:696px;">Nezkrácený</span>
<svg style="left:413px;top:704px" width="7" height="4" viewBox="0 0 7 4"><path d="M0 0 H7 L3.5 4 Z" fill="#000"/></svg>
<div style="left:405px;top:697px;width:1px;height:13px;background:#b5b5b5"></div>
<div class="fs" style="left:478px;top:601px;width:475px;height:120px;"></div>
<span class="lg" style="left:486px;top:595px;letter-spacing:-0.218px;">Evidenční stav</span>
<span class="f" style="left:495.6px;top:617px;letter-spacing:-0.079px;">Stav</span>
<div class="cb" style="left:526px;top:614px;width:220px;height:19px;"></div>
<span class="f" style="left:529.5px;top:616px;letter-spacing:-0.014px;">návrat zpět do evidenčního stavu</span>
<svg style="left:733px;top:624px" width="7" height="4" viewBox="0 0 7 4"><path d="M0 0 H7 L3.5 4 Z" fill="#000"/></svg>
<span class="f" style="left:495.6px;top:637px;letter-spacing:-0.250px;">Datum od</span>
<div class="inp" style="left:616px;top:634px;width:81px;height:19px;background:#e6e6e6"></div>
<span class="f" style="left:620px;top:637px;">18.04.2014</span>
<div style="left:696px;top:634px;width:17px;height:19px;background:#a9a9a9;border:1px solid #999;box-shadow:inset 1px 1px 0 #b4b4b4, inset -1px -1px 0 #9c9c9c"></div>
<svg style="left:698px;top:637px" width="13" height="13" viewBox="0 0 13 13" shape-rendering="crispEdges"><rect x="0" y="0" width="12" height="13" fill="#a9a9a9"/><rect x="0" y="0" width="1" height="13" fill="#a0a0a0"/><rect x="0" y="12" width="12" height="1" fill="#a0a0a0"/><rect x="11" y="1" width="1" height="12" fill="#a0a0a0"/><rect x="1" y="1" width="5" height="2" fill="#a0a0a0"/><rect x="6" y="1" width="5" height="2" fill="#b8b8b8"/><rect x="1" y="4" width="3" height="2" fill="#bcbcbc"/><rect x="5" y="4" width="3" height="2" fill="#bcbcbc"/><rect x="9" y="4" width="2" height="2" fill="#bcbcbc"/><rect x="1" y="7" width="3" height="2" fill="#bcbcbc"/><rect x="5" y="7" width="3" height="2" fill="#bcbcbc"/><rect x="9" y="7" width="2" height="2" fill="#bcbcbc"/><rect x="1" y="10" width="3" height="2" fill="#bcbcbc"/><rect x="5" y="10" width="3" height="2" fill="#bcbcbc"/><rect x="9" y="10" width="2" height="2" fill="#bcbcbc"/><rect x="4" y="6" width="5" height="4" fill="#a0a0a0"/><rect x="5" y="7" width="3" height="2" fill="#b8b8b8"/></svg>
<span class="f" style="left:725.6px;top:637px;letter-spacing:-0.036px;">Předpokládaný návrat</span>
<div class="inp" style="left:846px;top:634px;width:84px;height:19px;"></div>
<div style="left:929px;top:634px;width:17px;height:19px;background:#8e8e8e;border:1px solid #000;box-shadow:inset 1px 1px 0 #fff, inset 0 2px 0 #cfcfcf"></div>
<svg style="left:931px;top:637px" width="13" height="13" viewBox="0 0 13 13" shape-rendering="crispEdges"><rect x="0" y="0" width="12" height="13" fill="#808080"/><rect x="0" y="0" width="1" height="13" fill="#000"/><rect x="0" y="12" width="12" height="1" fill="#000"/><rect x="11" y="1" width="1" height="12" fill="#000"/><rect x="1" y="1" width="5" height="2" fill="#000"/><rect x="6" y="1" width="5" height="2" fill="#c8c8c8"/><rect x="1" y="4" width="3" height="2" fill="#fff"/><rect x="5" y="4" width="3" height="2" fill="#fff"/><rect x="9" y="4" width="2" height="2" fill="#fff"/><rect x="1" y="7" width="3" height="2" fill="#fff"/><rect x="5" y="7" width="3" height="2" fill="#fff"/><rect x="9" y="7" width="2" height="2" fill="#fff"/><rect x="1" y="10" width="3" height="2" fill="#fff"/><rect x="5" y="10" width="3" height="2" fill="#fff"/><rect x="9" y="10" width="2" height="2" fill="#fff"/><rect x="4" y="6" width="5" height="4" fill="#000"/><rect x="5" y="7" width="3" height="2" fill="#c8c8c8"/></svg>
<span class="f" style="left:495.6px;top:657px;letter-spacing:-0.274px;">Přepočet dnů MD</span>
<div class="inp" style="left:616px;top:654px;width:40px;height:19px;"></div>
<span class="f" style="left:765.7px;top:657px;letter-spacing:-0.185px;">Datum porodu</span>
<div class="inp" style="left:846px;top:654px;width:84px;height:19px;"></div>
<div style="left:929px;top:654px;width:17px;height:19px;background:#8e8e8e;border:1px solid #000;box-shadow:inset 1px 1px 0 #fff, inset 0 2px 0 #cfcfcf"></div>
<svg style="left:931px;top:657px" width="13" height="13" viewBox="0 0 13 13" shape-rendering="crispEdges"><rect x="0" y="0" width="12" height="13" fill="#808080"/><rect x="0" y="0" width="1" height="13" fill="#000"/><rect x="0" y="12" width="12" height="1" fill="#000"/><rect x="11" y="1" width="1" height="12" fill="#000"/><rect x="1" y="1" width="5" height="2" fill="#000"/><rect x="6" y="1" width="5" height="2" fill="#c8c8c8"/><rect x="1" y="4" width="3" height="2" fill="#fff"/><rect x="5" y="4" width="3" height="2" fill="#fff"/><rect x="9" y="4" width="2" height="2" fill="#fff"/><rect x="1" y="7" width="3" height="2" fill="#fff"/><rect x="5" y="7" width="3" height="2" fill="#fff"/><rect x="9" y="7" width="2" height="2" fill="#fff"/><rect x="1" y="10" width="3" height="2" fill="#fff"/><rect x="5" y="10" width="3" height="2" fill="#fff"/><rect x="9" y="10" width="2" height="2" fill="#fff"/><rect x="4" y="6" width="5" height="4" fill="#000"/><rect x="5" y="7" width="3" height="2" fill="#c8c8c8"/></svg>
<span class="f" style="left:495.6px;top:677px;letter-spacing:-0.179px;">6T před porodem</span>
<div class="inp" style="left:616px;top:674px;width:84px;height:19px;"></div>
<div style="left:699px;top:674px;width:17px;height:19px;background:#8e8e8e;border:1px solid #000;box-shadow:inset 1px 1px 0 #fff, inset 0 2px 0 #cfcfcf"></div>
<svg style="left:701px;top:677px" width="13" height="13" viewBox="0 0 13 13" shape-rendering="crispEdges"><rect x="0" y="0" width="12" height="13" fill="#808080"/><rect x="0" y="0" width="1" height="13" fill="#000"/><rect x="0" y="12" width="12" height="1" fill="#000"/><rect x="11" y="1" width="1" height="12" fill="#000"/><rect x="1" y="1" width="5" height="2" fill="#000"/><rect x="6" y="1" width="5" height="2" fill="#c8c8c8"/><rect x="1" y="4" width="3" height="2" fill="#fff"/><rect x="5" y="4" width="3" height="2" fill="#fff"/><rect x="9" y="4" width="2" height="2" fill="#fff"/><rect x="1" y="7" width="3" height="2" fill="#fff"/><rect x="5" y="7" width="3" height="2" fill="#fff"/><rect x="9" y="7" width="2" height="2" fill="#fff"/><rect x="1" y="10" width="3" height="2" fill="#fff"/><rect x="5" y="10" width="3" height="2" fill="#fff"/><rect x="9" y="10" width="2" height="2" fill="#fff"/><rect x="4" y="6" width="5" height="4" fill="#000"/><rect x="5" y="7" width="3" height="2" fill="#c8c8c8"/></svg>
<span class="f" style="left:495.6px;top:697px;letter-spacing:-0.446px;">DVZ pro MD minulé</span>
<div class="inp" style="left:616px;top:694px;width:50px;height:19px;"></div>
</body></html>
